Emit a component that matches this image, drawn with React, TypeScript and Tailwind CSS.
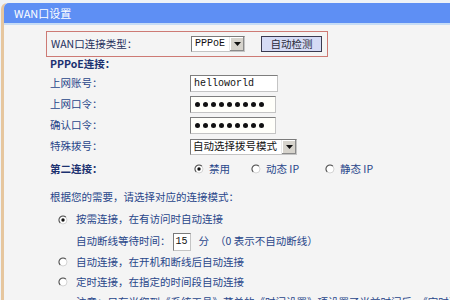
import type React from "react";

const CJK = '"Noto Sans CJK SC", "Liberation Sans", sans-serif';
const MONO = '"Liberation Mono", "Noto Sans CJK SC", monospace';

function Radio({ checked = false }: { checked?: boolean }) {
  return (
    <svg className="shrink-0" height={10} viewBox="0 0 10 10" width={10}>
      <circle cx={5} cy={5} fill="#ffffff" r={4} stroke="#d4d4d4" strokeWidth={1} />
      <path
        d="M2.17 7.83 A4 4 0 0 1 7.83 2.17"
        fill="none"
        stroke="#555"
        strokeWidth={1.2}
      />
      {checked && <circle cx={5} cy={5} fill="#111" r={1.7} />}
    </svg>
  );
}

function Arrow() {
  return (
    <div className="flex h-full w-[15px] shrink-0 items-center justify-center border-l border-[#e8e8e8] bg-[#d6d3cc] shadow-[inset_-1px_-1px_0_#8a8a8a,inset_1px_1px_0_#fff]">
      <svg height={4} viewBox="0 0 7 4" width={7}>
        <path d="M0 0 H7 L3.5 4 Z" fill="#111" />
      </svg>
    </div>
  );
}

function Row({
  label,
  bold = false,
  h,
  children,
}: {
  label: string;
  bold?: boolean;
  h: string;
  children?: React.ReactNode;
}) {
  return (
    <div className={`flex items-center pl-[4px] ${h}`}>
      <span
        className={`w-[140px] shrink-0 ${bold ? "font-bold text-[#1b3170]" : "text-[#28468a]"}`}
      >
        {label}
      </span>
      {children}
    </div>
  );
}

function Dots() {
  return (
    <div className="flex h-[17px] w-[86px] items-center gap-[3px] border border-[#7d7d7d] border-r-[#c4c4c4] border-b-[#c4c4c4] bg-[#fffffa] pl-[4px]">
      {[0, 1, 2, 3, 4, 5, 6, 7, 8].map((i) => (
        <span className="h-[5px] w-[5px] rounded-full bg-[#111]" key={i} />
      ))}
    </div>
  );
}

export default function App() {
  return (
    <div
      className="h-[300px] w-[450px] overflow-hidden bg-[#eef2f7] pt-[3px] text-[10.5px] leading-none"
      style={{ fontFamily: CJK }}
    >
      <div className="ml-[1px] h-full rounded-tl-[6px] border-l-[3px] border-[#e6c69e] bg-[#f4f4f4]">
        {/* Header */}
        <div className="flex h-[20px] items-center rounded-tl-[5px] bg-[#5e8ff4] pl-[10px] text-[11px] text-white">
          WAN口设置
        </div>
        <div className="h-[2px] bg-[#c6dcf5]" />

        <div className="pl-[42px] pt-[6px]">
          {/* Connection type */}
          <div className="flex h-[26px] w-[282px] items-center border border-[#cd7a74] pl-[4px]">
            <span className="w-[140px] shrink-0 text-[#1f2f5c]">WAN口连接类型：</span>
            <div className="flex h-[16px] w-[54px] items-center border border-[#7a7a7a] border-r-[#c4c4c4] border-b-[#c4c4c4] bg-white">
              <span
                className="flex-1 pl-[3px] text-[10px] text-[#111]"
                style={{ fontFamily: MONO }}
              >
                PPPoE
              </span>
              <Arrow />
            </div>
            <button
              className="ml-[16px] flex h-[16px] w-[61px] items-center justify-center border border-[#3a3a50] bg-[#d5dbf5] text-[10.5px] text-[#2b2b3a]"
              type="button"
            >
              自动检测
            </button>
          </div>

          <Row bold h="h-[16px] pb-[2px]" label="PPPoE连接：" />

          <Row h="h-[21px]" label="上网账号：">
            <div
              className="flex h-[17px] w-[88px] items-center border border-[#7d7d7d] border-r-[#c4c4c4] border-b-[#c4c4c4] bg-white pl-[3px] text-[10px] text-[#111]"
              style={{ fontFamily: MONO }}
            >
              helloworld
            </div>
          </Row>

          <Row h="h-[21px]" label="上网口令：">
            <Dots />
          </Row>

          <Row h="h-[21px]" label="确认口令：">
            <Dots />
          </Row>

          <Row h="h-[21px]" label="特殊拨号：">
            <div className="flex h-[16px] w-[107px] items-center border border-[#7a7a7a] border-r-[#c4c4c4] border-b-[#c4c4c4] bg-white">
              <span className="flex-1 pl-[2px] text-[#111]">自动选择拨号模式</span>
              <Arrow />
            </div>
          </Row>

          <Row bold h="h-[24px]" label="第二连接：">
            <div className="flex items-center text-[#28468a]">
              <div className="flex w-[60px] items-center gap-[5px] pl-[4px]">
                <Radio checked />
                <span>禁用</span>
              </div>
              <div className="flex w-[75px] items-center gap-[5px] pl-[1px]">
                <Radio />
                <span>动态 IP</span>
              </div>
              <div className="flex items-center gap-[5px]">
                <Radio />
                <span>静态 IP</span>
              </div>
            </div>
          </Row>

          {/* Connection mode */}
          <div className="mt-[6px] text-[#28468a]">
            <div className="flex h-[21px] items-center pl-[4px]">
              根据您的需要，请选择对应的连接模式：
            </div>
            <div className="flex h-[23px] items-center gap-[8px] pl-[12px]">
              <Radio checked />
              <span>按需连接，在有访问时自动连接</span>
            </div>
            <div className="flex h-[21px] items-center pl-[30px]">
              <span>自动断线等待时间：</span>
              <div
                className="ml-[2px] flex h-[18px] w-[18px] items-center justify-center border border-[#7a7a7a] border-r-[#c4c4c4] border-b-[#c4c4c4] bg-white text-[10px] text-[#111]"
                style={{ fontFamily: MONO }}
              >
                15
              </div>
              <span className="ml-[8px]">分</span>
              <span className="ml-[6px]">（0 表示不自动断线）</span>
            </div>
            <div className="flex h-[20px] items-center gap-[8px] pl-[12px]">
              <Radio />
              <span>自动连接，在开机和断线后自动连接</span>
            </div>
            <div className="flex h-[20px] items-center gap-[8px] pl-[12px]">
              <Radio />
              <span>定时连接，在指定的时间段自动连接</span>
            </div>
            <div className="flex h-[20px] items-center whitespace-nowrap pl-[30px]">
              注意：只有当您到《系统工具》菜单的《时间设置》项设置了当前时间后，《定时连接》功能才能生效。
            </div>
          </div>
        </div>
      </div>
    </div>
  );
}
